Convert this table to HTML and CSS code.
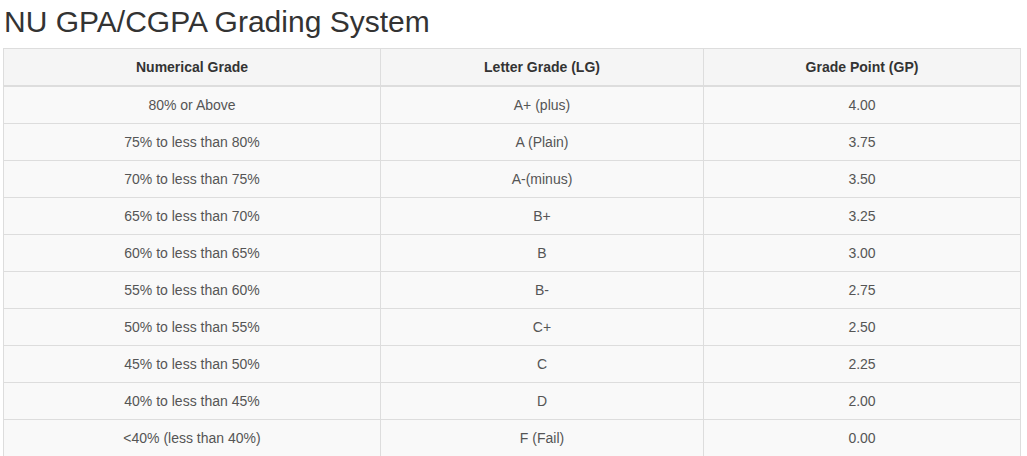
FILE: index.html
```html
<!DOCTYPE html>
<html lang="en">
<head>
<meta charset="utf-8">
<title>NU GPA/CGPA Grading System</title>
<link rel="stylesheet" href="styles.css">
</head>
<body>
<div class="page">
  <h1 class="title">NU GPA/CGPA Grading System</h1>
  <table class="grades">
    <thead>
      <tr><th class="c1">Numerical Grade</th><th class="c2">Letter Grade (LG)</th><th class="c3">Grade Point (GP)</th></tr>
    </thead>
    <tbody>
      <tr><td>80% or Above</td><td>A+ (plus)</td><td>4.00</td></tr>
      <tr><td>75% to less than 80%</td><td>A (Plain)</td><td>3.75</td></tr>
      <tr><td>70% to less than 75%</td><td>A-(minus)</td><td>3.50</td></tr>
      <tr><td>65% to less than 70%</td><td>B+</td><td>3.25</td></tr>
      <tr><td>60% to less than 65%</td><td>B</td><td>3.00</td></tr>
      <tr><td>55% to less than 60%</td><td>B-</td><td>2.75</td></tr>
      <tr><td>50% to less than 55%</td><td>C+</td><td>2.50</td></tr>
      <tr><td>45% to less than 50%</td><td>C</td><td>2.25</td></tr>
      <tr><td>40% to less than 45%</td><td>D</td><td>2.00</td></tr>
      <tr><td>&lt;40% (less than 40%)</td><td>F (Fail)</td><td>0.00</td></tr>
    </tbody>
  </table>
</div>
</body>
</html>
```
FILE: styles.css
```css
html, body {
  margin: 0;
  padding: 0;
  background: #ffffff;
}
.page {
  padding: 5px 0 0 3px;
  font-family: "Liberation Sans", Arial, sans-serif;
  color: #555;
}
.title {
  margin: 0 0 10px 1px;
  font-size: 30px;
  line-height: 33px;
  font-weight: normal;
  color: #333;
}
.grades {
  width: 1018px;
  border-collapse: collapse;
  background: #f9f9f9;
  border: 1px solid #dddddd;
  font-size: 14px;
}
.grades th,
.grades td {
  border: 1px solid #dddddd;
  padding: 8px;
  line-height: 20px;
  text-align: center;
}
.grades th {
  font-weight: bold;
  color: #333;
  background: #f5f5f5;
  border-bottom: 2px solid #dddddd;
}
.c1 { width: 360px; }
.c2 { width: 306px; }
```
